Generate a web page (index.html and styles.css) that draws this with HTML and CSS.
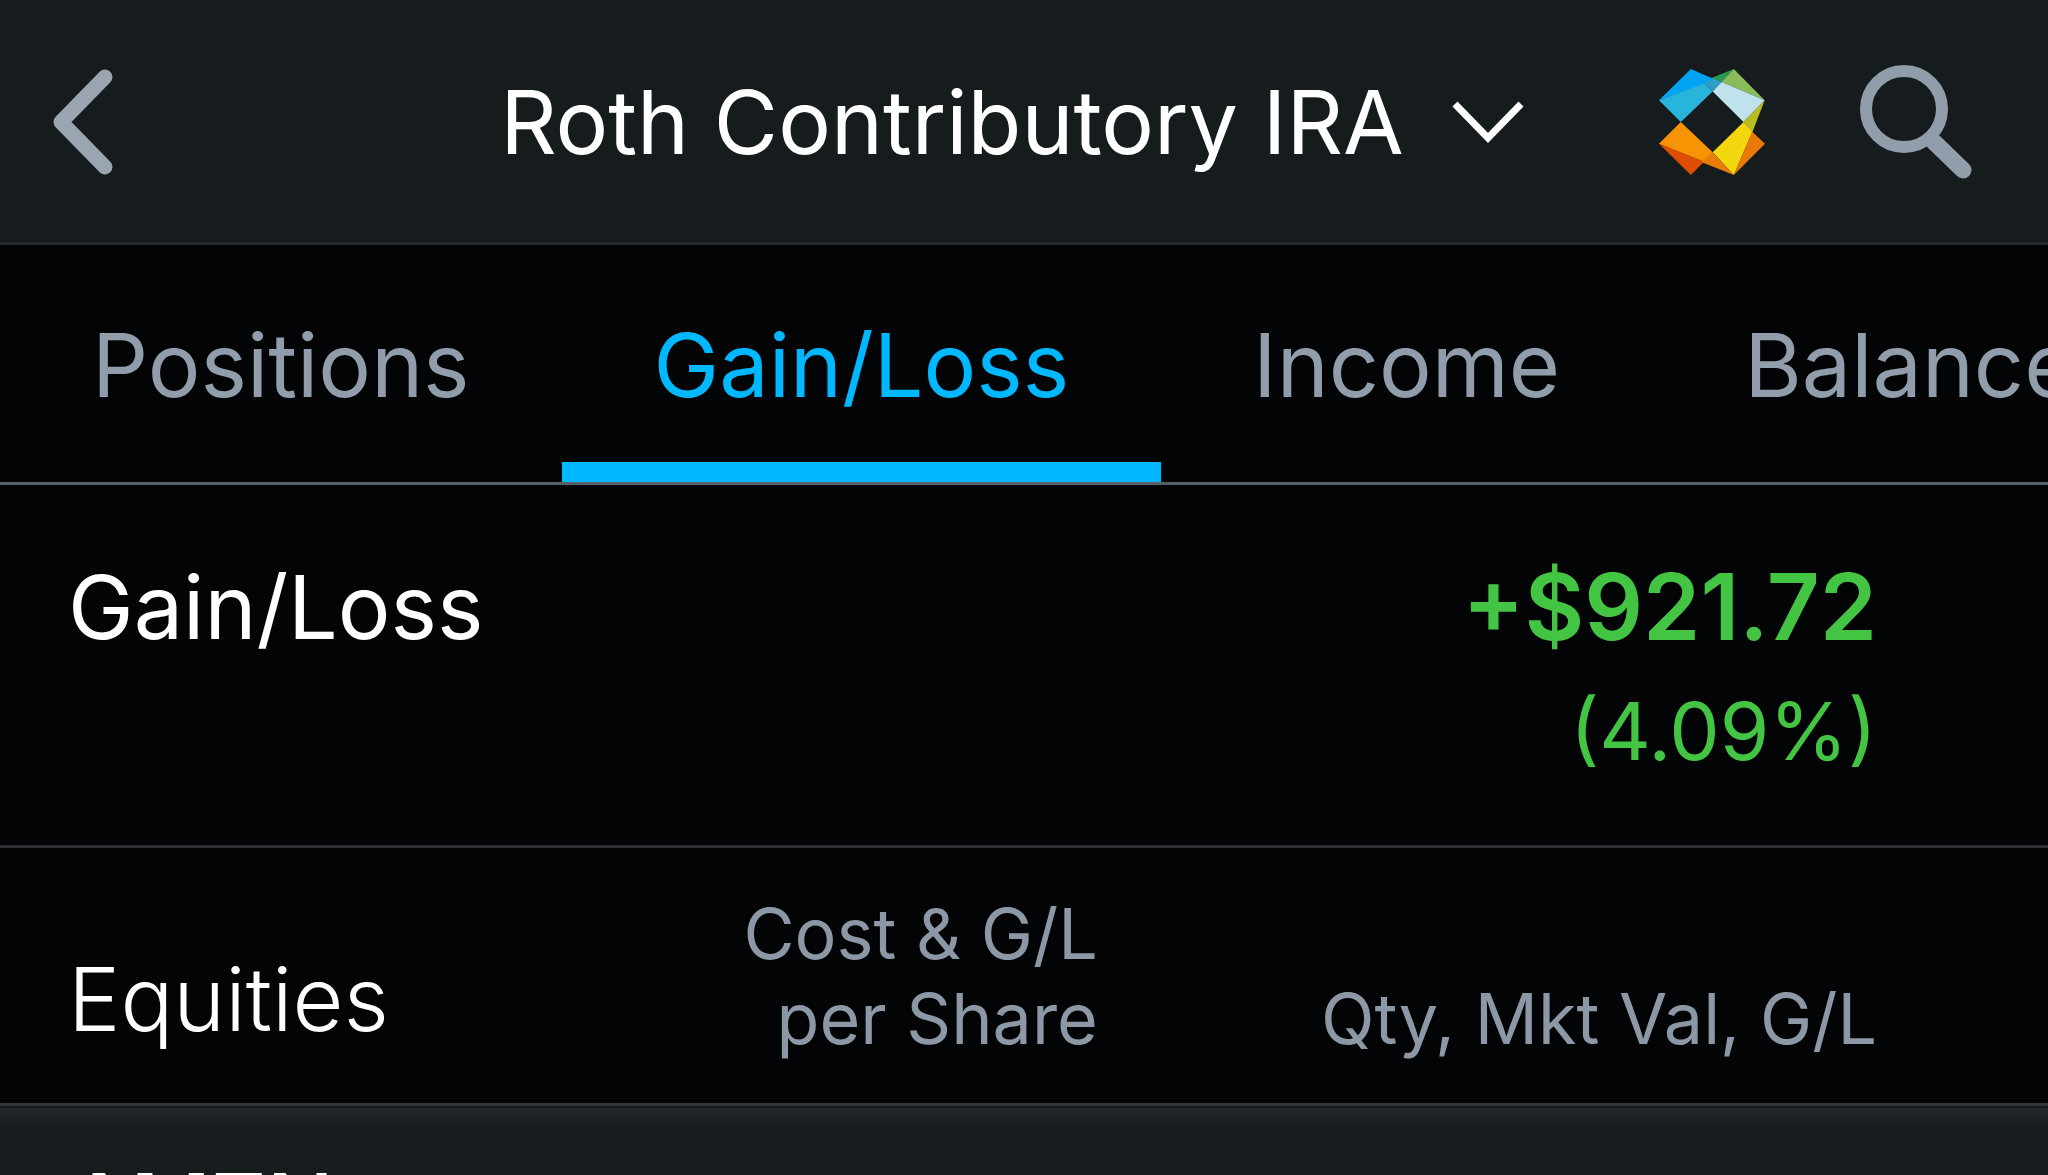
FILE: index.html
```html
<!DOCTYPE html>
<html lang="en">
<head>
    <meta charset="UTF-8">
    <meta name="viewport" content="width=device-width, initial-scale=1.0">
    <title>Roth Contributory IRA - Gain/Loss</title>
    <link rel="stylesheet" href="styles.css">
</head>
<body>
    <header class="topbar">
        <button type="button" class="icon-btn back" aria-label="Back">
            <svg width="61" height="106" viewBox="0 0 61 106">
                <path d="M53 8 L9 53 L53 98" fill="none" stroke="#9aa5b1" stroke-width="15" stroke-linecap="round" stroke-linejoin="round"/>
            </svg>
        </button>
        <button type="button" class="account">
            <span>Roth Contributory IRA</span>
            <svg width="72" height="44" viewBox="0 0 72 44">
                <path d="M3 4 L36 38 L69 4" fill="none" stroke="#ffffff" stroke-width="7"/>
            </svg>
        </button>
        <div class="actions">
            <button type="button" class="icon-btn" aria-label="Home">
                <svg width="106" height="106" viewBox="60 57 316 316">
                    <polygon fill="#02a3f1" points="155,57 60,150 197,102 220,85"/>
                    <polygon fill="#29b4dc" points="60,150 125,215 220,124 195,100"/>
                    <polygon fill="#2c9fc6" points="195,100 220,83 248,96 220,124"/>
                    <polygon fill="#2a994c" points="218,83 283,57 248,96"/>
                    <polygon fill="#8bba5b" points="283,57 375,150 247,96"/>
                    <polygon fill="#bfe2ec" points="247,96 375,150 312,215 220,124"/>
                    <polygon fill="#b8be1b" points="375,150 312,215 338,246"/>
                    <polygon fill="#f2d60e" points="312,215 338,245 283,373 220,305"/>
                    <polygon fill="#e97a09" points="338,244 376,280 283,373"/>
                    <polygon fill="#f79403" points="125,215 60,280 195,334 220,305"/>
                    <polygon fill="#dd4d02" points="60,280 155,373 195,333"/>
                    <polygon fill="#e97d0a" points="218,304 283,373 188,335"/>
                </svg>
            </button>
            <button type="button" class="icon-btn" aria-label="Search">
                <svg width="112" height="114" viewBox="0 0 112 114">
                    <circle cx="44" cy="44" r="38" fill="none" stroke="#919daa" stroke-width="12"/>
                    <path d="M74 77 L103 105" fill="none" stroke="#919daa" stroke-width="17" stroke-linecap="round"/>
                </svg>
            </button>
        </div>
    </header>

    <nav class="tabs">
        <a href="#positions">Positions</a>
        <a href="#gain-loss" class="active" aria-current="page">Gain/Loss</a>
        <a href="#income">Income</a>
        <a href="#balances">Balances</a>
    </nav>

    <main>
        <section class="summary" id="gain-loss">
            <h1>Gain/Loss</h1>
            <div class="total">
                <strong>+$921.72</strong>
                <span>(4.09%)</span>
            </div>
        </section>

        <table class="holdings">
            <thead>
                <tr>
                    <th scope="col" class="name">Equities</th>
                    <th scope="col" class="cost">Cost &amp; G/L<br>per Share</th>
                    <th scope="col" class="value">Qty, Mkt Val, G/L</th>
                </tr>
            </thead>
            <tbody>
                <tr>
                    <td class="symbol">AMZN</td>
                    <td></td>
                    <td></td>
                </tr>
            </tbody>
        </table>
    </main>
</body>
</html>
```

FILE: styles.css
```css
* {
    box-sizing: border-box;
}
html, body {
    height: 100%;
}
body {
    margin: 0;
    overflow: hidden;
    background-color: #030406;
    color: #ffffff;
    font-family: Inter, Roboto, sans-serif;
    font-size: 88px;
    line-height: 112px;
}
button {
    padding: 0;
    border: 0;
    background: none;
    color: inherit;
    font: inherit;
    cursor: pointer;
}
svg {
    display: block;
}

/* top bar */
.topbar {
    display: grid;
    grid-template-columns: 1fr auto 1fr;
    align-items: center;
    height: 245px;
    padding: 2px 76px 0 52px;
    background-color: #161b1d;
    border-bottom: 3px solid #25292b;
}
.icon-btn {
    flex: none;
}
.back {
    justify-self: start;
}
.account {
    display: flex;
    align-items: center;
    gap: 48px;
    white-space: nowrap;
}
.actions {
    display: flex;
    align-items: center;
    justify-content: flex-end;
    gap: 95px;
}

/* tabs */
.tabs {
    display: flex;
    height: 240px;
    overflow: hidden;
    border-bottom: 3px solid #55606b;
}
.tabs a {
    flex: none;
    padding: 64px 92px 0;
    border-bottom: 20px solid transparent;
    color: #919daa;
    text-decoration: none;
}
.tabs a.active {
    color: #00b8ff;
    border-bottom-color: #00b8ff;
}

/* account total */
.summary {
    display: flex;
    justify-content: space-between;
    padding: 66px 171px 58px 68px;
    border-bottom: 3px solid #2c2f33;
}
.summary h1 {
    margin: 0;
    font-size: 88px;
    font-weight: 400;
}
.total {
    display: flex;
    flex-direction: column;
    gap: 12px;
    text-align: right;
    color: #43c443;
}
.total strong {
    font-size: 92px;
    font-weight: 600;
}
.total span {
    font-size: 80px;
}

/* holdings */
.holdings {
    width: 100%;
    border-collapse: collapse;
    table-layout: fixed;
}
.holdings th {
    padding: 43px 0 42px;
    font-weight: 400;
    text-align: right;
    vertical-align: bottom;
}
.holdings .name {
    width: 28%;
    padding-left: 68px;
    padding-bottom: 48px;
    font-weight: 300;
    text-align: left;
}
.holdings .cost {
    width: 26%;
    padding-right: 8px;
}
.holdings .cost,
.holdings .value {
    color: #8c98a5;
    font-size: 70px;
    line-height: 85px;
}
.holdings .value {
    padding-right: 171px;
}
.holdings tbody tr {
    background: linear-gradient(#25292c, #161b1d 18px);
    border-top: 3px solid #343639;
}
.holdings td {
    padding: 43px 0;
}
.holdings .symbol {
    padding-left: 68px;
    font-weight: 500;
}
```
